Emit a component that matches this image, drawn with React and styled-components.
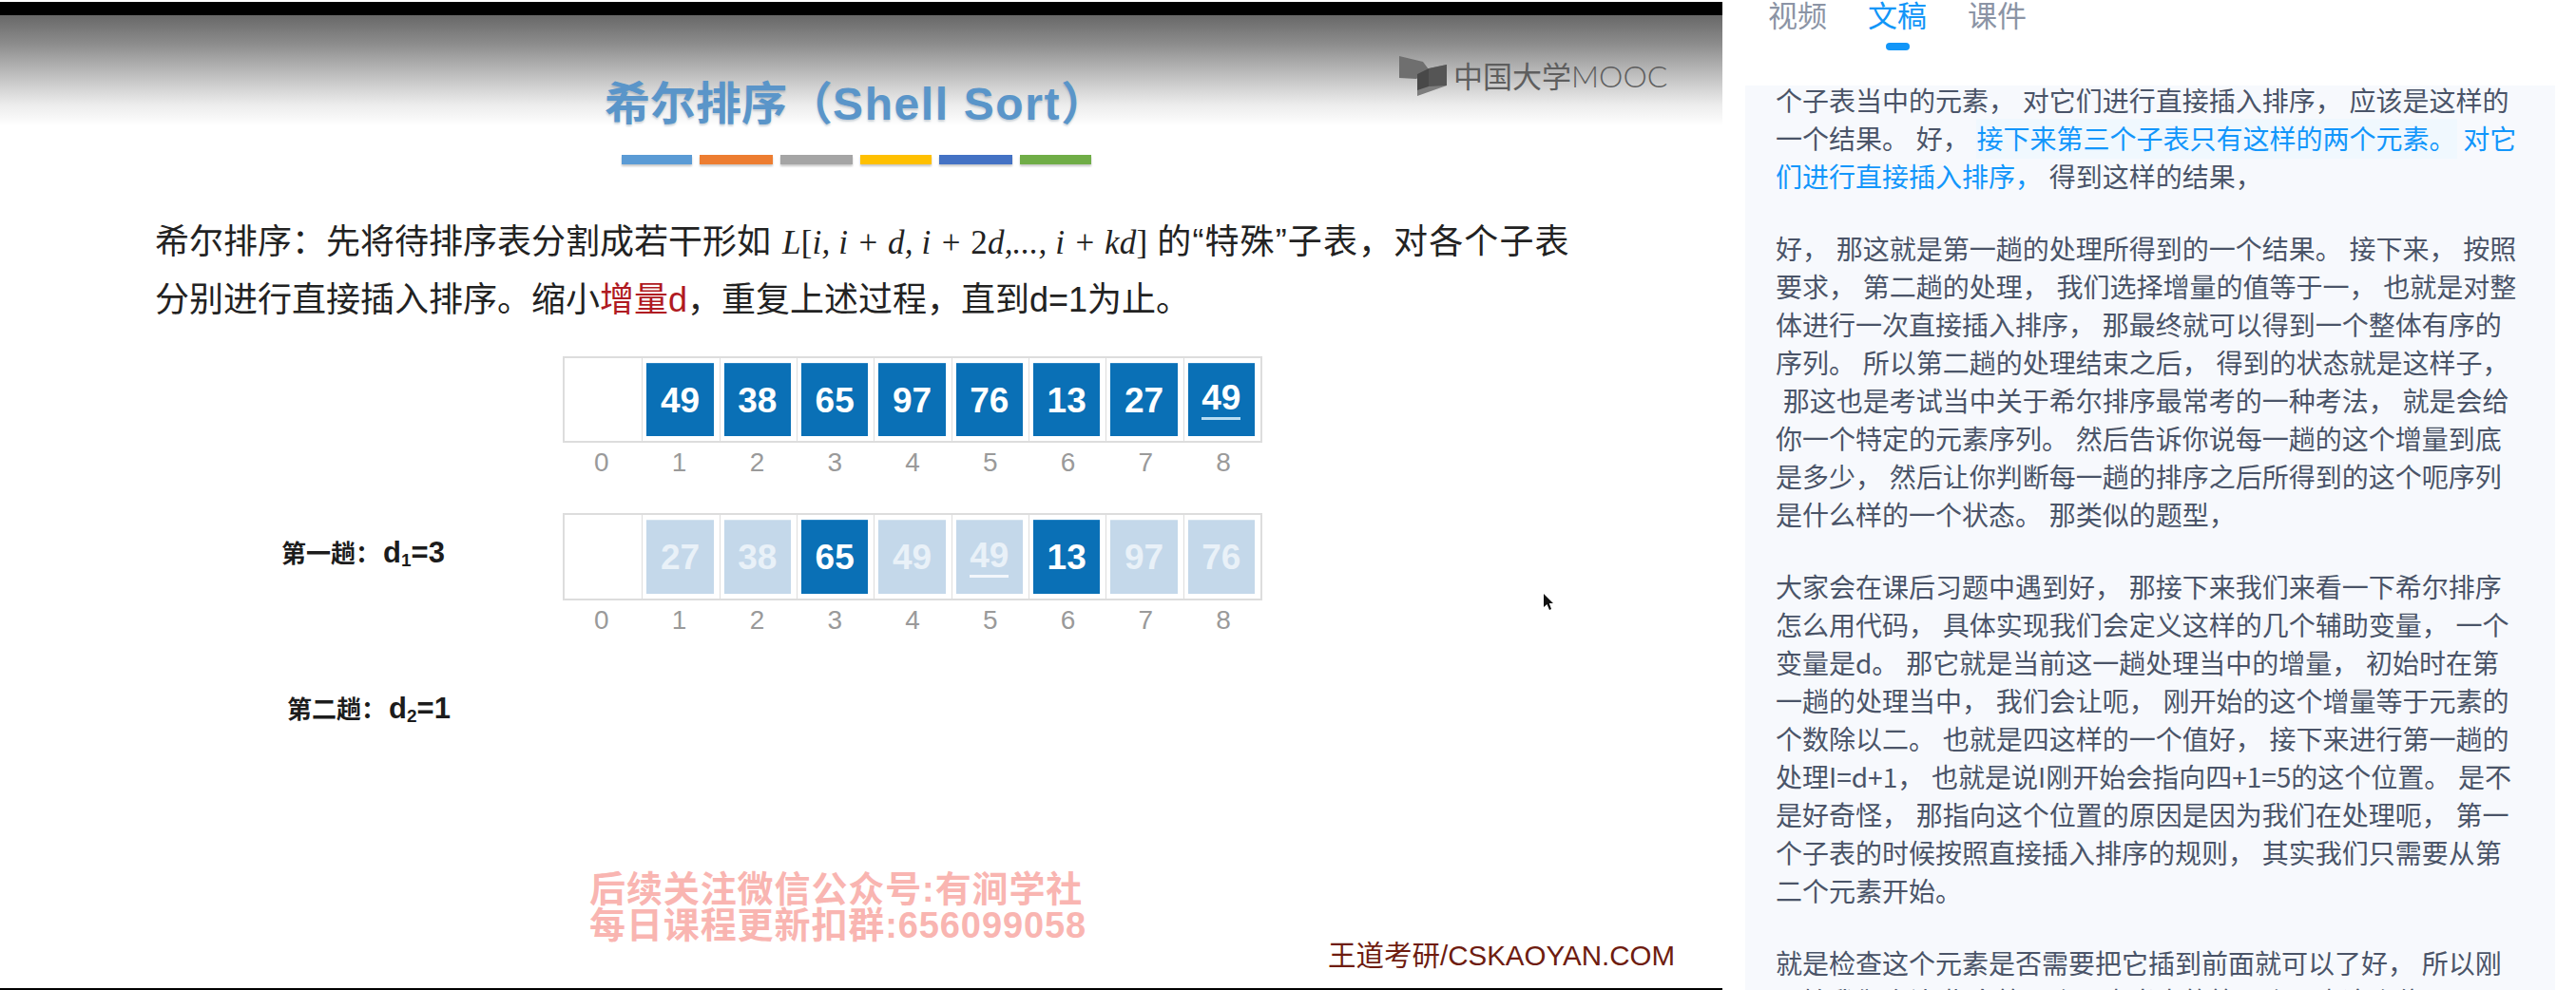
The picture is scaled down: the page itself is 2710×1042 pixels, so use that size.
import React from "react";
import styled, { createGlobalStyle } from "styled-components";

const CJK = `"Liberation Sans", "Noto Sans CJK SC", sans-serif`;

const GlobalStyle = createGlobalStyle`
  html, body {
    margin: 0;
    padding: 0;
    background: #fff;
    overflow: hidden;
  }
  * {
    box-sizing: border-box;
  }
`;

const Page = styled.div`
  width: 2710px;
  height: 1042px;
  display: flex;
  background: #fff;
  font-family: ${CJK};
`;

const Video = styled.div`
  position: relative;
  width: 1812px;
  height: 1042px;
  flex-shrink: 0;
  padding-top: 2px;
  display: flex;
  flex-direction: column;
`;

const BlackBar = styled.div`
  height: ${(props) => props.$h}px;
  background: #000;
  flex-shrink: 0;
`;

const Slide = styled.div`
  flex: 1;
  min-height: 0;
  display: flex;
  flex-direction: column;
  background: linear-gradient(#686868 0, #8c8c8c 30px, #bdbdbd 62px, #ececec 94px, #fbfbfb 112px, #fff 116px);
`;

const Title = styled.h1`
  margin: 64px 0 0;
  height: 60px;
  padding-left: 636px;
  font-size: 48px;
  line-height: 60px;
  font-weight: 700;
  color: #5a95c9;
  white-space: pre;
  text-shadow: 0 2px 2px rgba(60, 90, 120, 0.25);
  & > span {
    letter-spacing: 1.6px;
  }
`;

const Stripes = styled.div`
  margin: 23px 0 0 654px;
  display: flex;
  gap: 8px;
`;

const Stripe = styled.span`
  width: ${(props) => props.$w}px;
  height: 10px;
  background: ${(props) => props.$c};
  box-shadow: 0 2px 2px rgba(0, 0, 0, 0.22);
`;

const Lead = styled.div`
  margin: 52px 0 0 163px;
  font-size: 36px;
  line-height: 60px;
  color: #222;
  white-space: pre;
`;

const Math = styled.span`
  font-family: "Liberation Serif", serif;
  font-style: italic;
  font-size: 35px;
  margin: 0 10px 0 12px;
  letter-spacing: 0.2px;
  & > b {
    font-style: normal;
    font-weight: 400;
  }
`;

const Tail = styled.span`
  letter-spacing: 1.1px;
`;

const Key = styled.span`
  color: #b01a22;
`;

const Stage = styled.div`
  margin-top: ${(props) => props.$top}px;
  display: grid;
  grid-template-columns: 592px 736px;
  align-items: center;
`;

const StageLabel = styled.div`
  padding-left: ${(props) => props.$indent}px;
  margin-top: ${(props) => props.$shift || 0}px;
  font-size: 26px;
  line-height: 30px;
  font-weight: 700;
  color: #1c1c1c;
`;

const Formula = styled.span`
  margin-left: 3px;
  font-size: 31px;
  & > sub {
    font-size: 19px;
    line-height: 0;
    vertical-align: -4px;
  }
`;

const Cells = styled.div`
  display: grid;
  grid-template-columns: repeat(9, 1fr);
  height: ${(props) => props.$h}px;
  border: 2px solid #ddd;
`;

const Cell = styled.div`
  padding: 5px 6px 5px 4px;
  display: flex;
  border-left: ${(props) => (props.$first ? "none" : "1.5px solid #ddd")};
`;

const Tile = styled.div`
  flex: 1;
  display: flex;
  align-items: center;
  justify-content: center;
  background: ${(props) => (props.$dim ? "#c4d8ea" : "#0a70b6")};
  color: ${(props) => (props.$dim ? "#e9f1f8" : "#fff")};
  font-size: 37px;
  font-weight: 700;
  line-height: 1;
  border-top: 1px solid ${(props) => (props.$dim ? "#d3e2ef" : "#2a85c4")};
`;

const Dup = styled.span`
  padding-bottom: 2px;
  border-bottom: 3px solid ${(props) => (props.$dim ? "#f2f6fb" : "#b8dcf2")};
`;

const Indexes = styled.div`
  display: grid;
  grid-template-columns: repeat(9, 1fr);
  margin: 6px 0 0 592px;
  width: 736px;
  font-size: 28px;
  line-height: 30px;
  text-align: center;
  color: #9a9a9a;
`;

const Logo = styled.div`
  position: absolute;
  left: 1472px;
  top: 58px;
  display: flex;
  align-items: flex-start;
  gap: 2px;
  color: #5e5e5e;
  font-size: 31px;
  line-height: 44px;
  & b {
    font-family: "Lato", sans-serif;
    font-weight: 300;
    font-size: 32px;
  }
`;

const Watermark = styled.div`
  position: absolute;
  left: 620px;
  top: 917px;
  font-size: 38px;
  line-height: 38px;
  font-weight: 700;
  letter-spacing: 0.9px;
  color: #f9b5b1;
  white-space: pre;
`;

const Credit = styled.div`
  position: absolute;
  left: 1397px;
  top: 989px;
  font-size: 29.5px;
  line-height: 34px;
  color: #6e1c10;
  white-space: pre;
`;

const Pointer = styled.svg`
  position: absolute;
  left: 1623px;
  top: 624px;
`;

const Side = styled.aside`
  flex: 1;
  min-width: 0;
  padding: 0 22px 0 24px;
  display: flex;
  flex-direction: column;
`;

const Tabs = styled.nav`
  height: 90px;
  flex-shrink: 0;
  padding-left: 24px;
  display: flex;
  gap: 43px;
`;

const Tab = styled.div`
  display: flex;
  flex-direction: column;
  align-items: center;
  font-size: 31px;
  line-height: 36px;
  color: ${(props) => (props.$on ? "#1296f8" : "#8b94a5")};
  &::after {
    content: "";
    width: 25px;
    height: 8px;
    margin-top: 9px;
    border-radius: 4px;
    background: ${(props) => (props.$on ? "#1296f8" : "transparent")};
  }
`;

const Transcript = styled.div`
  flex: 1;
  min-height: 0;
  overflow: hidden;
  padding-left: 32px;
  background: #f7f9fd;
`;

const Scroll = styled.div`
  margin-top: -5px;
`;

const Para = styled.p`
  margin: 0 0 36px;
  font-size: 28px;
  line-height: 40px;
  color: #4a5468;
  font-family: "Noto Sans CJK SC", sans-serif;
  word-spacing: 1.5px;
`;

const Line = styled.div`
  white-space: pre;
`;

const Said = styled.span`
  color: #1296fb;
  background: ${(props) => (props.$now ? "#f0f8fe" : "transparent")};
  box-shadow: ${(props) => (props.$now ? "0 1px 0 1px #f0f8fe" : "none")};
`;

const stripes = [
  [74, "#5b9bd5"],
  [77, "#ed7d31"],
  [76, "#a5a5a5"],
  [75, "#ffc000"],
  [77, "#4472c4"],
  [75, "#70ad47"],
];

const first = [[49], [38], [65], [97], [76], [13], [27], [49, true]];
const second = [
  [27, false, true],
  [38, false, true],
  [65],
  [49, false, true],
  [49, true, true],
  [13],
  [97, false, true],
  [76, false, true],
];

const paragraphs = [
  [
    "好， 那这就是第一趟的处理所得到的一个结果。 接下来， 按照",
    "要求， 第二趟的处理， 我们选择增量的值等于一， 也就是对整",
    "体进行一次直接插入排序， 那最终就可以得到一个整体有序的",
    "序列。 所以第二趟的处理结束之后， 得到的状态就是这样子，",
    " 那这也是考试当中关于希尔排序最常考的一种考法， 就是会给",
    "你一个特定的元素序列。 然后告诉你说每一趟的这个增量到底",
    "是多少， 然后让你判断每一趟的排序之后所得到的这个呃序列",
    "是什么样的一个状态。 那类似的题型，",
  ],
  [
    "大家会在课后习题中遇到好， 那接下来我们来看一下希尔排序",
    "怎么用代码， 具体实现我们会定义这样的几个辅助变量， 一个",
    "变量是d。 那它就是当前这一趟处理当中的增量， 初始时在第",
    "一趟的处理当中， 我们会让呃， 刚开始的这个增量等于元素的",
    "个数除以二。 也就是四这样的一个值好， 接下来进行第一趟的",
    "处理I=d+1， 也就是说I刚开始会指向四+1=5的这个位置。 是不",
    "是好奇怪， 那指向这个位置的原因是因为我们在处理呃， 第一",
    "个子表的时候按照直接插入排序的规则， 其实我们只需要从第",
    "二个元素开始。",
  ],
  [
    "就是检查这个元素是否需要把它插到前面就可以了好， 所以刚",
    "开始我们会让I指向第一个子表当中的第二个元素这个位置。 那",
  ],
];

const Row = ({ items }) => (
  <Cells $h={items === first ? 91 : 92}>
    <Cell $first />
    {items.map(([value, dup, dim], i) => (
      <Cell key={i}>
        <Tile $dim={dim}>{dup ? <Dup $dim={dim}>{value}</Dup> : value}</Tile>
      </Cell>
    ))}
  </Cells>
);

const IndexRow = () => (
  <Indexes>
    {[0, 1, 2, 3, 4, 5, 6, 7, 8].map((n) => (
      <span key={n}>{n}</span>
    ))}
  </Indexes>
);

const App = () => {
  return (
    <Page>
      <GlobalStyle />
      <Video>
        <BlackBar $h={14} />
        <Slide>
          <Title>
            希尔排序（<span>Shell Sort</span>）
          </Title>
          <Stripes>
            {stripes.map(([w, c]) => (
              <Stripe key={c} $w={w} $c={c} />
            ))}
          </Stripes>
          <Lead>
            <div>
              希尔排序：先将待排序表分割成若干形如
              <Math>
                L<b>[</b>i, i + d, i + <b>2</b>d,..., i + kd<b>]</b>
              </Math>
              <Tail>的“特殊”子表，对各个子表</Tail>
            </div>
            <div>
              分别进行直接插入排序。缩小<Key>增量d</Key>，重复上述过程，直到d=1为止。
            </div>
          </Lead>
          <Stage $top={29}>
            <div />
            <Row items={first} />
          </Stage>
          <IndexRow />
          <Stage $top={38}>
            <StageLabel $indent={296} $shift={-8}>
              第一趟：
              <Formula>
                d<sub>1</sub>=3
              </Formula>
            </StageLabel>
            <Row items={second} />
          </Stage>
          <IndexRow />
          <Stage $top={63}>
            <StageLabel $indent={302}>
              第二趟：
              <Formula>
                d<sub>2</sub>=1
              </Formula>
            </StageLabel>
          </Stage>
        </Slide>
        <BlackBar $h={2} />
        <Logo>
          <svg width="55" height="46" viewBox="0 0 55 46">
            <path d="M0 1 L25 7 L31 15 L18 25 L0 24 Z" fill="#6f6f6f" />
            <path d="M19 43 L19 20 L31 14 L50 10 L50 32 Z" fill="#7d7d7d" />
            <path d="M19 20 L31 14 L31 33 L19 37 Z" fill="#484848" />
            <path d="M31 14 L50 10 L50 32 L31 33 Z" fill="#555" />
          </svg>
          <span>
            中国大学<b>MOOC</b>
          </span>
        </Logo>
        <Watermark>
          <div>后续关注微信公众号:有涧学社</div>
          <div>每日课程更新扣群:656099058</div>
        </Watermark>
        <Credit>王道考研/CSKAOYAN.COM</Credit>
        <Pointer width="14" height="24" viewBox="0 0 14 24">
          <path d="M1 1 L1 15 L4.5 12 L7 18 L9 17 L6.8 11 L11 11 Z" fill="#111" />
        </Pointer>
      </Video>
      <Side>
        <Tabs>
          <Tab>视频</Tab>
          <Tab $on>文稿</Tab>
          <Tab>课件</Tab>
        </Tabs>
        <Transcript>
          <Scroll>
            <Para>
              <Line>个子表当中的元素， 对它们进行直接插入排序， 应该是这样的</Line>
              <Line>
                一个结果。 好， <Said $now>接下来第三个子表只有这样的两个元素。</Said> <Said>对它</Said>
              </Line>
              <Line>
                <Said>们进行直接插入排序，</Said> 得到这样的结果，
              </Line>
            </Para>
            {paragraphs.map((lines, i) => (
              <Para key={i}>
                {lines.map((line, j) => (
                  <Line key={j}>{line}</Line>
                ))}
              </Para>
            ))}
          </Scroll>
        </Transcript>
      </Side>
    </Page>
  );
};

export default App;
